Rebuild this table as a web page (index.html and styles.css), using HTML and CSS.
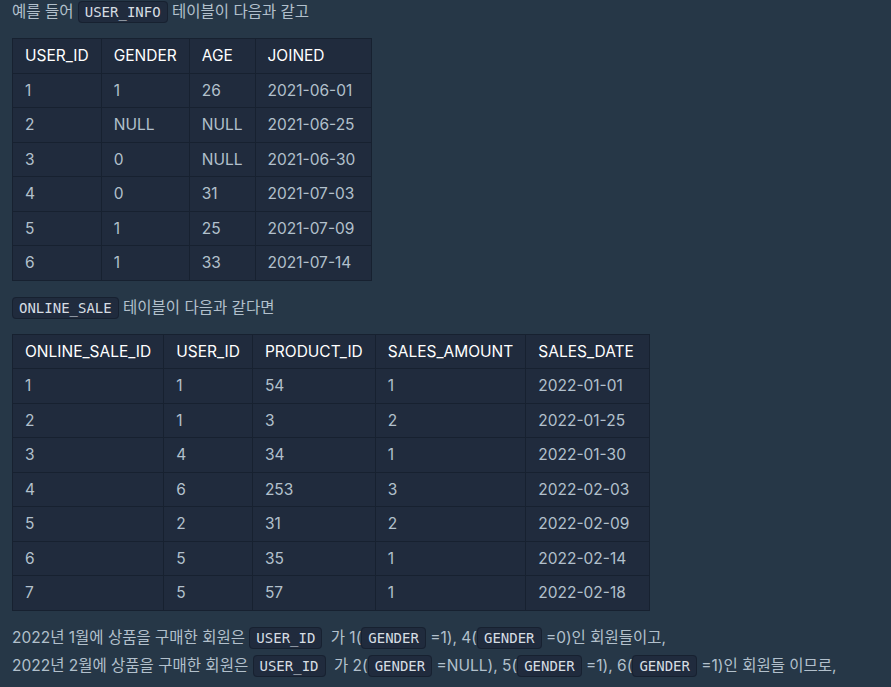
FILE: index.html
```html
<!DOCTYPE html>
<html lang="ko">
<head>
<meta charset="utf-8">
<link rel="stylesheet" href="styles.css">
</head>
<body>
<div class="content">
  <p class="first">예를 들어 <code>USER_INFO</code> 테이블이 다음과 같고</p>
  <table class="t1">
    <thead><tr><th>USER_ID</th><th>GENDER</th><th>AGE</th><th>JOINED</th></tr></thead>
    <tbody>
      <tr><td>1</td><td>1</td><td>26</td><td>2021-06-01</td></tr>
      <tr><td>2</td><td>NULL</td><td>NULL</td><td>2021-06-25</td></tr>
      <tr><td>3</td><td>0</td><td>NULL</td><td>2021-06-30</td></tr>
      <tr><td>4</td><td>0</td><td>31</td><td>2021-07-03</td></tr>
      <tr><td>5</td><td>1</td><td>25</td><td>2021-07-09</td></tr>
      <tr><td>6</td><td>1</td><td>33</td><td>2021-07-14</td></tr>
    </tbody>
  </table>
  <p><code>ONLINE_SALE</code> 테이블이 다음과 같다면</p>
  <table class="t2">
    <thead><tr><th>ONLINE_SALE_ID</th><th>USER_ID</th><th>PRODUCT_ID</th><th>SALES_AMOUNT</th><th>SALES_DATE</th></tr></thead>
    <tbody>
      <tr><td>1</td><td>1</td><td>54</td><td>1</td><td>2022-01-01</td></tr>
      <tr><td>2</td><td>1</td><td>3</td><td>2</td><td>2022-01-25</td></tr>
      <tr><td>3</td><td>4</td><td>34</td><td>1</td><td>2022-01-30</td></tr>
      <tr><td>4</td><td>6</td><td>253</td><td>3</td><td>2022-02-03</td></tr>
      <tr><td>5</td><td>2</td><td>31</td><td>2</td><td>2022-02-09</td></tr>
      <tr><td>6</td><td>5</td><td>35</td><td>1</td><td>2022-02-14</td></tr>
      <tr><td>7</td><td>5</td><td>57</td><td>1</td><td>2022-02-18</td></tr>
    </tbody>
  </table>
  <p>2022년 1월에 상품을 구매한 회원은 <code class="gap">USER_ID</code> 가 1(<code>GENDER</code> =1), 4(<code>GENDER</code> =0)인 회원들이고,<br>2022년 2월에 상품을 구매한 회원은 <code class="gap">USER_ID</code> 가 2(<code>GENDER</code> =NULL), 5(<code>GENDER</code> =1), 6(<code>GENDER</code> =1)인 회원들 이므로,</p>
</div>
</body>
</html>
```

FILE: styles.css
```css
html, body {
  margin: 0;
  padding: 0;
  background: #263747;
}
body {
  font-family: Inter, "Noto Sans CJK KR", sans-serif;
  font-size: 15.5px;
  color: #b2c0cc;
}
.content {
  padding: 0 12px;
}
p {
  margin: 0;
  line-height: 28px;
}
p.first {
  margin-top: -2px;
}
code {
  font-family: "DejaVu Sans Mono", monospace;
  font-size: 14px;
  line-height: 1;
  color: #d6dde3;
  background: #202b3d;
  border: 1px solid #172130;
  border-radius: 4px;
  padding: 2px 6px;
}
code.gap {
  margin-right: 4px;
}
table {
  border-collapse: collapse;
  background: #202b3d;
  margin: 12px 0 13px;
}
th, td {
  border: 1px solid #172130;
  padding: 5px 12px;
  line-height: 23.5px;
  text-align: left;
  white-space: nowrap;
}
td:last-child {
  padding-right: 16px;
}
th:last-child {
  padding-right: 15px;
}
th {
  font-weight: 400;
  color: #ffffff;
}
td {
  color: #b2c0cc;
}
```
